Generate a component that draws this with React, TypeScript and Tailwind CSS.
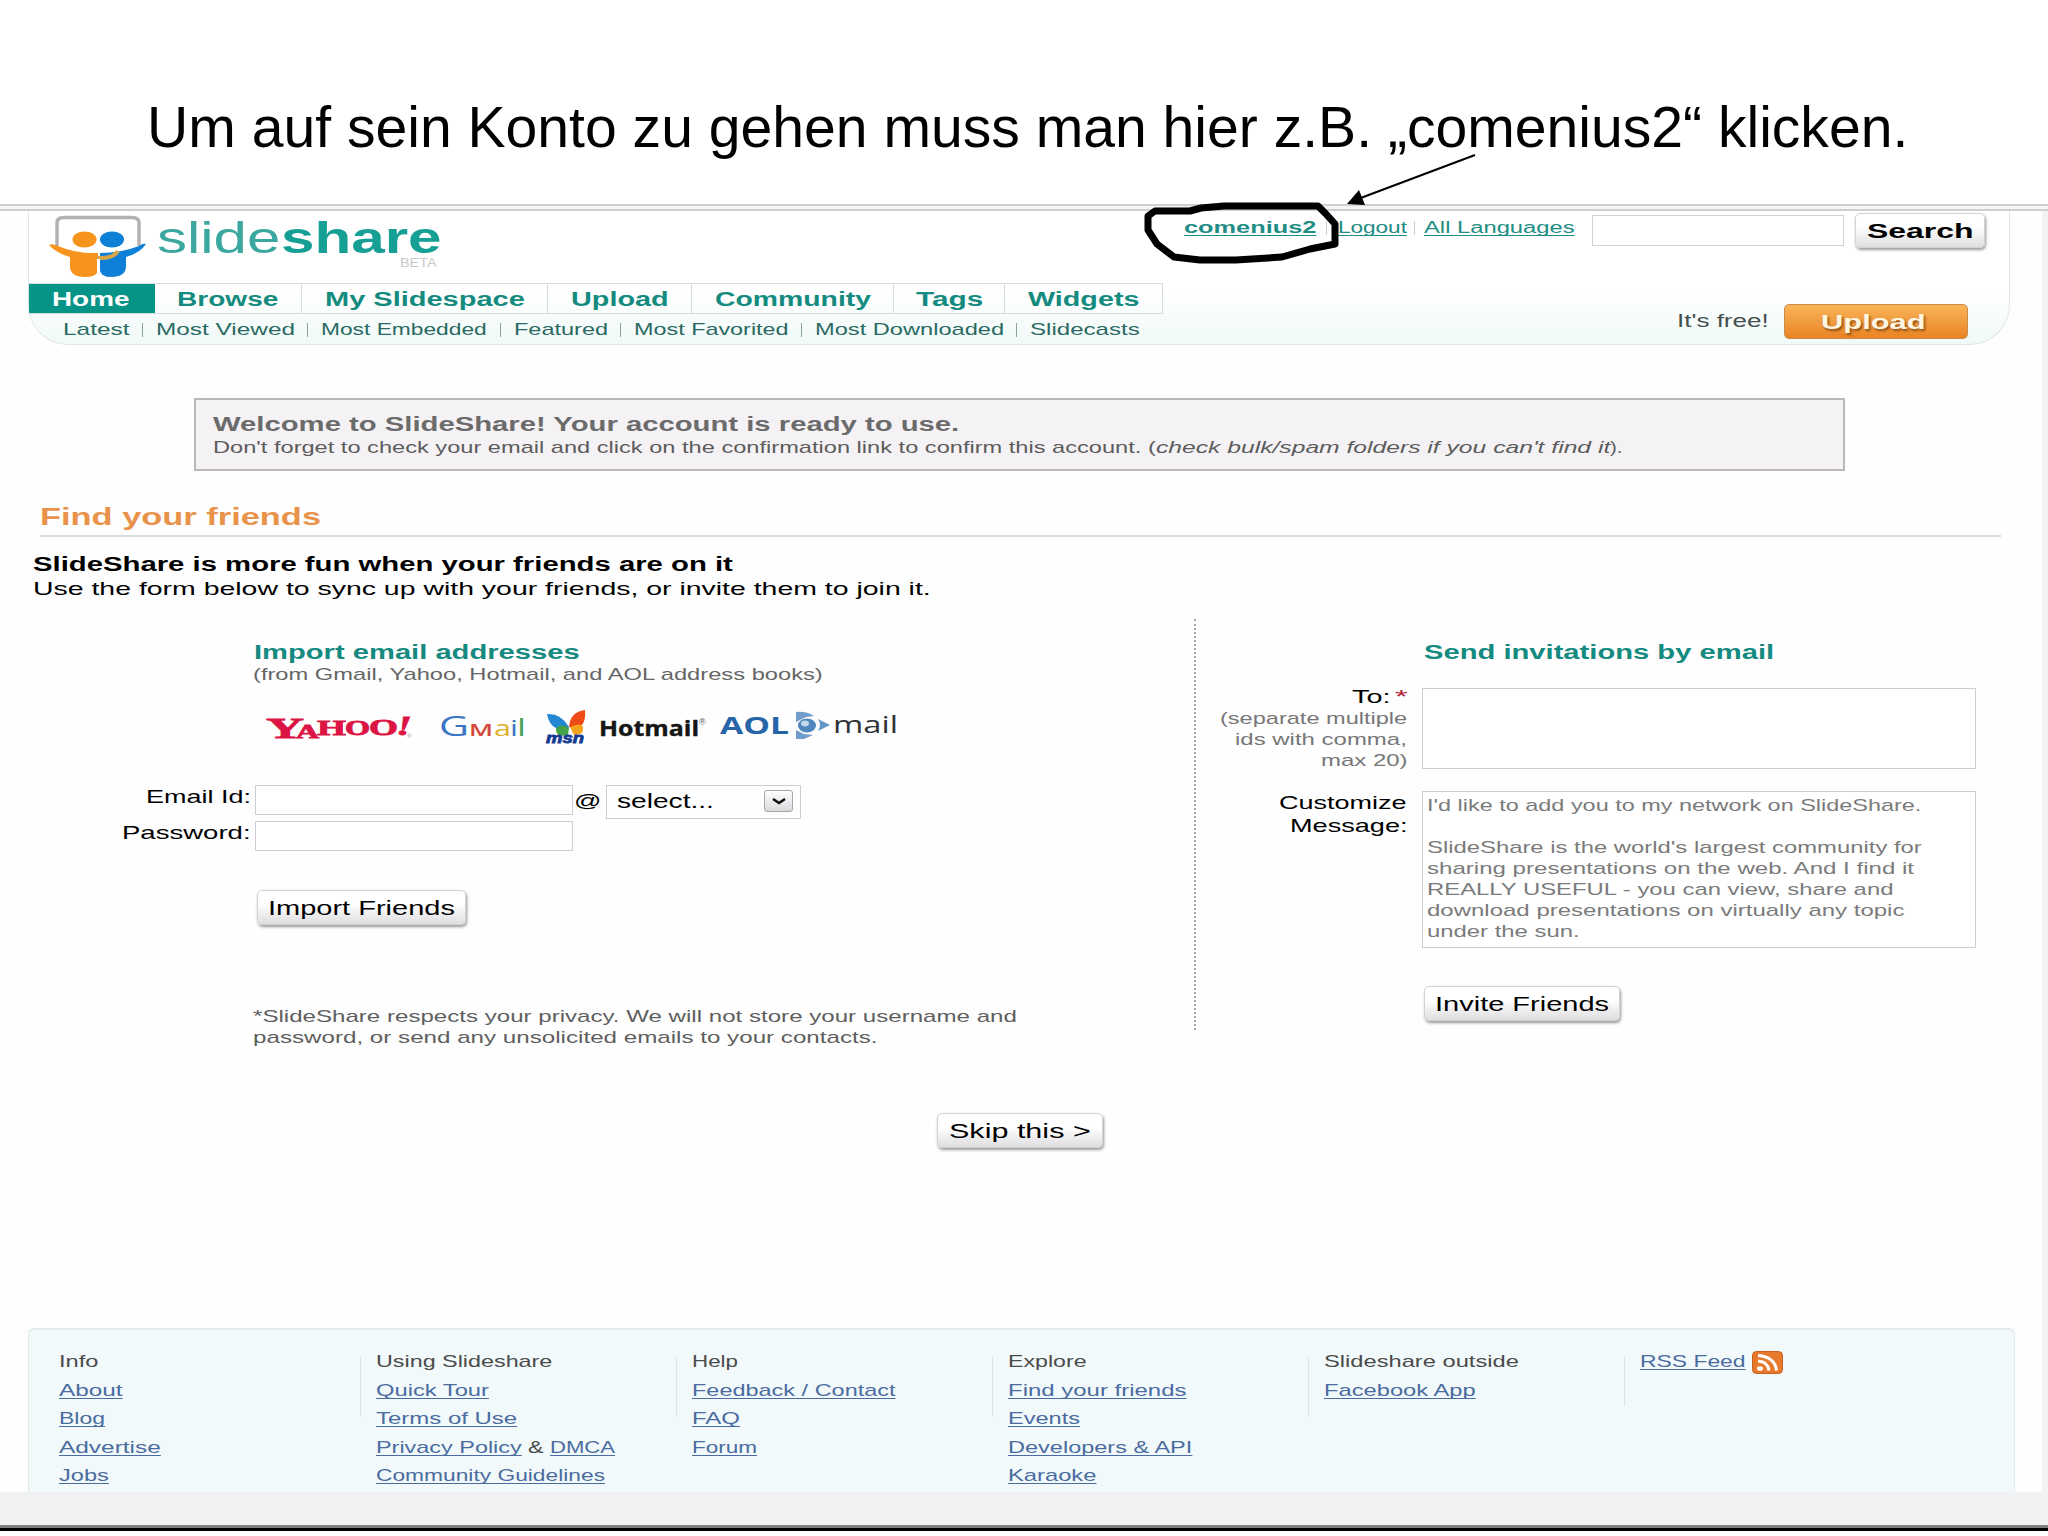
import { useLayoutEffect, useRef, useState } from "react";
import type { ReactNode } from "react";
import { clsx } from "clsx";

type FitProps = { className: string; underline?: boolean; children: ReactNode };

// Stretches its text to the width of the box it sits in.
function Fit({ className, underline, children }: FitProps) {
  const box = useRef<HTMLSpanElement>(null);
  const text = useRef<HTMLSpanElement>(null);
  const [scale, setScale] = useState(1);

  useLayoutEffect(() => {
    if (!box.current || !text.current) return;
    setScale(box.current.clientWidth / text.current.offsetWidth);
  }, [children]);

  return (
    <span ref={box} className={clsx("block shrink-0 whitespace-nowrap text-left", className)}>
      <span
        ref={text}
        className={clsx(
          "inline-block origin-left",
          underline && "underline decoration-1 underline-offset-2 [text-decoration-skip-ink:none]"
        )}
        style={{ transform: `scaleX(${scale})` }}
      >
        {children}
      </span>
    </span>
  );
}

const tabs = [
  { label: "Home", box: "w-[126px] bg-[#069489] pr-[3px] text-white", text: "w-[78px]" },
  { label: "Browse", box: "w-[147px] border-r pr-[2px]", text: "w-[101px]" },
  { label: "My Slidespace", box: "w-[246px] border-r", text: "w-[200px]" },
  { label: "Upload", box: "w-[144px] border-r", text: "w-[98px]" },
  { label: "Community", box: "w-[202px] border-r", text: "w-[156px]" },
  { label: "Tags", box: "w-[111px] border-r", text: "w-[67px]" },
  { label: "Widgets", box: "w-[158px] border-r", text: "w-[112px]" },
];

const subnav = [
  { label: "Latest", text: "w-[66px]" },
  { label: "Most Viewed", text: "w-[139px]" },
  { label: "Most Embedded", text: "w-[166px]" },
  { label: "Featured", text: "w-[94px]" },
  { label: "Most Favorited", text: "w-[154px]" },
  { label: "Most Downloaded", text: "w-[189px]" },
  { label: "Slidecasts", text: "w-[109px]" },
];

const message = [
  { line: "I'd like to add you to my network on SlideShare.", text: "w-[495px]" },
  { line: "", text: "" },
  { line: "SlideShare is the world's largest community for", text: "w-[495px]" },
  { line: "sharing presentations on the web. And I find it", text: "w-[487px]" },
  { line: "REALLY USEFUL - you can view, share and", text: "w-[466px]" },
  { line: "download presentations on virtually any topic", text: "w-[477px]" },
  { line: "under the sun.", text: "w-[153px]" },
];

const footer = [
  {
    title: "Info",
    titleWidth: "w-[39px]",
    column: "w-[301px]",
    links: [
      { label: "About", text: "w-[63px]" },
      { label: "Blog", text: "w-[46px]" },
      { label: "Advertise", text: "w-[102px]" },
      { label: "Jobs", text: "w-[50px]" },
    ],
  },
  {
    title: "Using Slideshare",
    titleWidth: "w-[177px]",
    column: "w-[316px]",
    links: [
      { label: "Quick Tour", text: "w-[113px]" },
      { label: "Terms of Use", text: "w-[141px]" },
      { label: "Privacy Policy", text: "w-[146px]", extra: "DMCA" },
      { label: "Community Guidelines", text: "w-[229px]" },
    ],
  },
  {
    title: "Help",
    titleWidth: "w-[46px]",
    column: "w-[316px]",
    links: [
      { label: "Feedback / Contact", text: "w-[203px]" },
      { label: "FAQ", text: "w-[48px]" },
      { label: "Forum", text: "w-[65px]" },
    ],
  },
  {
    title: "Explore",
    titleWidth: "w-[79px]",
    column: "w-[316px]",
    links: [
      { label: "Find your friends", text: "w-[179px]" },
      { label: "Events", text: "w-[72px]" },
      { label: "Developers & API", text: "w-[184px]" },
      { label: "Karaoke", text: "w-[88px]" },
    ],
  },
  {
    title: "Slideshare outside",
    titleWidth: "w-[195px]",
    column: "w-[316px]",
    links: [{ label: "Facebook App", text: "w-[152px]" }],
  },
];

function PushButton({ className, text, children }: { className: string; text: string; children: ReactNode }) {
  return (
    <button
      type="button"
      className={clsx(
        "flex h-[35px] items-center justify-center rounded-[5px] border border-[#d2d2d2] bg-linear-to-b from-white from-40% to-[#dedee0] text-black shadow-[1px_2px_3px_#999]",
        className
      )}
    >
      <Fit className={clsx("leading-6", text)}>{children}</Fit>
    </button>
  );
}

function SlideshareLogo() {
  return (
    <svg className="h-[63px] w-[98px]" viewBox="0 0 98 63" fill="none">
      <path d="M8 31V8Q8 2.500 15 2.500H83Q90 2.500 90 8V31" stroke="#b3b1b1" strokeWidth="3.500" />
      <path d="M0 30Q3 28 9 31Q28 39 49 38V56Q47 62 36 62Q21 62 21 51V42Q7 38 0 30Z" fill="#f7941e" />
      <path d="M97 29Q94 28 90 31Q72 38 51 38V56Q53 62 62 62Q77 62 77 51V42Q91 38 97 29Z" fill="#0e80d8" />
      <path d="M48 43Q64 44 69 36" stroke="#d9a548" strokeWidth="4" />
      <path d="M49.500 44V62" stroke="#fff" strokeWidth="3" />
      <ellipse cx="35.500" cy="24.500" rx="12" ry="8" fill="#f7941e" />
      <ellipse cx="63" cy="24.500" rx="12" ry="8" fill="#0e80d8" />
    </svg>
  );
}

function MailLogos() {
  return (
    <svg className="h-[36px] w-[634px] overflow-visible" viewBox="0 0 634 36">
      <g fontFamily="'Liberation Serif', serif" fontWeight="700" fill="#dc1444" stroke="#dc1444" strokeWidth="0.800">
        <text x="0" y="28" fontSize="30" textLength="38" lengthAdjust="spacingAndGlyphs">Y</text>
        <text x="30" y="28" fontSize="18" textLength="23" lengthAdjust="spacingAndGlyphs">A</text>
        <text x="51" y="25" fontSize="22" textLength="29" lengthAdjust="spacingAndGlyphs">H</text>
        <text x="79" y="25" fontSize="20" textLength="25" lengthAdjust="spacingAndGlyphs">O</text>
        <text x="103" y="25" fontSize="23" textLength="29" lengthAdjust="spacingAndGlyphs">O</text>
        <text x="130" y="25" fontSize="28" fontStyle="italic" textLength="16" lengthAdjust="spacingAndGlyphs">!</text>
      </g>
      <text x="141" y="28" fontFamily="'Liberation Sans', sans-serif" fontSize="6" fill="#999">®</text>
      <g fontFamily="'Open Sans', sans-serif">
        <text x="173" y="26" fontSize="27" fill="#3b76c4" textLength="30" lengthAdjust="spacingAndGlyphs">G</text>
        <text x="203" y="26" fontSize="16" fontWeight="600" fill="#d4473c" textLength="24" lengthAdjust="spacingAndGlyphs">M</text>
        <text x="228" y="26" fontSize="22" fill="#e2b12c" textLength="17" lengthAdjust="spacingAndGlyphs">a</text>
        <text x="244" y="26" fontSize="22" fill="#3b76c4" textLength="8" lengthAdjust="spacingAndGlyphs">i</text>
        <text x="251" y="26" fontSize="23" fill="#4ba35a" textLength="9" lengthAdjust="spacingAndGlyphs">l</text>
      </g>
      <path d="M281 4Q295 3 303 17L301 24Q291 25 290 18Q283 15 281 4Z" fill="#2387d2" />
      <path d="M290 18Q296 13 303 18L302 25Q289 28 290 18Z" fill="#43a447" />
      <path d="M303 17Q304 2 319 0Q320 10 316 15Q310 19 303 17Z" fill="#ee4b18" />
      <path d="M304 17Q315 12 317 17Q318 26 308 25Z" fill="#f5a51d" />
      <text x="280" y="33" fontFamily="'Liberation Sans', sans-serif" fontSize="14" fontWeight="700" fontStyle="italic" fill="#153a93" stroke="#153a93" strokeWidth="0.800" textLength="38" lengthAdjust="spacingAndGlyphs">msn</text>
      <text x="333" y="26" fontFamily="'Open Sans', sans-serif" fontSize="22" fontWeight="700" fill="#161616" stroke="#161616" strokeWidth="0.400" textLength="100" lengthAdjust="spacingAndGlyphs">Hotmail</text>
      <text x="433" y="15" fontFamily="'Liberation Sans', sans-serif" fontSize="9" fill="#555">®</text>
      <text x="454" y="24" fontFamily="'Open Sans', sans-serif" fontSize="24" fontWeight="700" fill="#2765a8" textLength="69" lengthAdjust="spacingAndGlyphs">AOL</text>
      <path d="M530 2Q540 1 548 6L540 7L530 12Z" fill="#6f9cc8" />
      <path d="M530 20L538 24L547 25L538 29L530 29Z" fill="#6f9cc8" />
      <ellipse cx="541" cy="15.500" rx="9" ry="7" fill="#4f86bd" />
      <ellipse cx="539" cy="13.500" rx="4" ry="3" fill="#c3d9ed" />
      <path d="M552 9L564 15L552 21Q556 15 552 9Z" fill="#6497c9" />
      <text x="567" y="22.500" fontFamily="'Open Sans', sans-serif" fontSize="24" fill="#2f3338" textLength="65" lengthAdjust="spacingAndGlyphs">mail</text>
    </svg>
  );
}

function RssIcon() {
  return (
    <svg className="h-[23px] w-[31px]" viewBox="0 0 31 23" fill="none">
      <rect x="0.500" y="0.500" width="30" height="22" rx="4" fill="#e6792b" stroke="#c95f1d" />
      <ellipse cx="8" cy="17.500" rx="3" ry="2.300" fill="#fff" />
      <path d="M6 10Q16 10.500 17 19.500M6 4.500Q23 6 24.500 19.500" stroke="#fff" strokeWidth="3" />
    </svg>
  );
}

// Hand-drawn circle and arrow around the account name
function Annotation() {
  return (
    <svg className="pointer-events-none absolute left-[1130px] top-[140px] h-[140px] w-[360px]" viewBox="1130 140 360 140" fill="none">
      <path
        d="M1148 230V216L1155 211L1190 211L1201 208L1224 206H1318L1326 214L1335 224V244L1310 249L1282 257L1236 260H1200L1174 257L1157 244Z"
        stroke="#000"
        strokeWidth="7"
        strokeLinejoin="round"
      />
      <path d="M1475 155L1358 199" stroke="#000" strokeWidth="2" />
      <path d="M1347 204L1359 190L1365 205Z" fill="#000" />
    </svg>
  );
}

function Header() {
  return (
    <header className="ml-7 flex h-[134px] w-[1982px] rounded-b-[40px] border-x border-b border-[#dde8e6] bg-linear-to-b from-white from-60% to-[#f0faf8] font-[Liberation_Sans,Arial,sans-serif]">
      <div className="w-[1135px]">
        <div className="flex h-[72px] pl-[20px] pt-1">
          <SlideshareLogo />
          <div className="ml-[10px] flex flex-col text-[#16a095]">
            <div className="flex pt-[2px] text-[44px] leading-[42px]">
              <Fit className="w-[124px] text-[#3ba79e]">slide</Fit>
              <Fit className="w-[160px] font-bold">share</Fit>
            </div>
            <Fit className="ml-[243px] mt-[-2px] w-[36px] text-[12px] leading-[12px] text-[#c9c9c9]">BETA</Fit>
          </div>
        </div>
        <nav className="flex h-[31px] text-xl font-bold text-[#158b80]">
          {tabs.map((tab) => (
            <div key={tab.label} className={clsx("flex items-center justify-center border-y border-[#d3dedd]", tab.box)}>
              <Fit className={clsx("leading-6", tab.text)}>{tab.label}</Fit>
            </div>
          ))}
        </nav>
        <div className="flex pl-[34px] pt-[6px] text-[17px] leading-5 text-[#2a6a63]">
          {subnav.map((item, i) => (
            <div key={item.label} className="flex">
              {i > 0 && <span className="flex w-[26.500px] items-center justify-center"><i className="h-[14px] w-px bg-[#8aa3a0]" /></span>}
              <Fit className={item.text}>{item.label}</Fit>
            </div>
          ))}
        </div>
      </div>
      <div className="flex-1">
        <div className="flex h-[93px] pl-[20px] pt-[2px] text-base leading-5 text-[#218d84]">
          <Fit underline className="mt-[5px] w-[133px] font-bold">comenius2</Fit>
          <i className="ml-[9px] mt-2 h-[14px] w-px bg-[#c5d2d0]" />
          <Fit underline className="ml-[11px] mt-[5px] w-[69px]">Logout</Fit>
          <i className="ml-[7px] mt-2 h-[14px] w-px bg-[#c5d2d0]" />
          <Fit underline className="ml-[9px] mt-[5px] w-[150px]">All Languages</Fit>
          <div className="ml-[18px] mt-[2px] h-[31px] w-[252px] border border-[#cfd3d3] bg-white" />
          <PushButton className="ml-[11px] w-[130px] text-xl font-bold" text="w-[107px]">Search</PushButton>
        </div>
        <div className="flex justify-end pr-[41px]">
          <Fit className="mr-[16px] mt-[7px] w-[91px] text-lg leading-5 text-[#454f4e]">It's free!</Fit>
          <button
            type="button"
            className="flex h-[35px] w-[184px] items-center justify-center rounded-[5px] border border-[#c98a4a] bg-linear-to-b from-[#f8b457] to-[#ea8423] pr-[6px] text-xl font-bold text-[#fff6e2]"
          >
            <Fit className="w-[105px] leading-6 [text-shadow:1px_2px_2px_#8a4d12]">Upload</Fit>
          </button>
        </div>
      </div>
    </header>
  );
}

function ImportForm() {
  return (
    <section className="w-[1194px] pt-[21px] text-black">
      <Fit className="ml-[254px] w-[325px] text-xl leading-6 font-bold text-[#148a80]">Import email addresses</Fit>
      <Fit className="ml-[253px] mt-px w-[570px] text-[17px] leading-5 text-[#666]">(from Gmail, Yahoo, Hotmail, and AOL address books)</Fit>
      <div className="ml-[266px] mt-[25px]">
        <MailLogos />
      </div>
      <div className="mt-[39px] flex h-9 text-[19px] leading-6">
        <Fit className="ml-[146px] w-[105px]">Email Id:</Fit>
        <div className="ml-1 h-[30px] w-[318px] border border-[#cdcdd2] bg-white" />
        <Fit className="ml-px mt-1 w-[27px]">@</Fit>
        <div className="ml-[5px] flex h-[34px] w-[195px] justify-between border border-[#cdcdd2] pl-[10px] pr-[7px] pt-[3px]">
          <Fit className="w-[97px] text-xl leading-6">select...</Fit>
          <span className="mt-px flex h-[22px] w-[29px] items-center justify-center rounded-[3px] border border-[#a5a5aa] bg-linear-to-b from-white to-[#dadade]">
            <svg className="h-[7px] w-[14px]" viewBox="0 0 14 7" fill="none">
              <path d="M1 1L7 5L13 1" stroke="#111" strokeWidth="2.500" />
            </svg>
          </span>
        </div>
      </div>
      <div className="flex h-[69px] text-[19px] leading-6">
        <Fit className="ml-[122px] w-[129px]">Password:</Fit>
        <div className="ml-1 h-[30px] w-[318px] border border-[#cdcdd2] bg-white" />
      </div>
      <PushButton className="ml-[257px] w-[209px] text-xl" text="w-[187px]">Import Friends</PushButton>
      <div className="ml-[253px] mt-[81px] text-[17px] leading-[21px] text-[#5f5f5f]">
        <Fit className="w-[764px]">*SlideShare respects your privacy. We will not store your username and</Fit>
        <Fit className="w-[624px]">password, or send any unsolicited emails to your contacts.</Fit>
      </div>
    </section>
  );
}

function InviteForm() {
  return (
    <section className="h-[411px] border-l-2 border-dotted border-[#a9a9a9] pt-[21px]">
      <Fit className="ml-[228px] w-[350px] text-xl leading-6 font-bold text-[#148a80]">Send invitations by email</Fit>
      <div className="mt-6 flex">
        <div className="flex w-[211px] flex-col items-end text-[17px] leading-[21px] text-[#777]">
          <div className="mt-[-2px] flex text-[19px] leading-[22px] text-black">
            <Fit className="w-[38px]">To:</Fit>
            <Fit className="ml-[5px] w-[12px] text-[#b01830]">*</Fit>
          </div>
          <Fit className="w-[187px]">(separate multiple</Fit>
          <Fit className="w-[172px]">ids with comma,</Fit>
          <Fit className="w-[86px]">max 20)</Fit>
        </div>
        <div className="ml-[15px] h-[81px] w-[554px] border border-[#cdcdd2] bg-white" />
      </div>
      <div className="mt-[20px] flex">
        <div className="flex w-[211px] flex-col items-end text-[19px] leading-[23px] text-black">
          <Fit className="w-[128px]">Customize</Fit>
          <Fit className="w-[117px]">Message:</Fit>
        </div>
        <div className="ml-[15px] h-[157px] w-[554px] border border-[#cdcdd2] bg-white pl-1 pt-[3px] text-[17px] leading-[21px] text-[#7b7b7b]">
          {message.map(({ line, text }) =>
            line ? <Fit key={line} className={text}>{line}</Fit> : <div key="gap" className="h-[21px]" />
          )}
        </div>
      </div>
      <PushButton className="ml-[228px] mt-[38px] w-[196px] text-xl" text="w-[174px]">Invite Friends</PushButton>
    </section>
  );
}

function Footer() {
  return (
    <footer className="ml-7 flex h-[164px] w-[1987px] rounded-t-md border-x border-t-2 border-[#e3e9ea] bg-[#f2f9fb] pl-[30px] pt-[22px] text-[17px] leading-5 text-[#4b4b4b]">
      {footer.map((col, i) => (
        <div key={col.title} className={clsx("flex", col.column)}>
          {i > 0 && <i className="mr-[15px] mt-[5px] h-[60px] w-px bg-[#dbe3e4]" />}
          <div className="flex flex-col gap-[8.600px]">
            <Fit className={col.titleWidth}>{col.title}</Fit>
            {col.links.map((link) => (
              <div key={link.label} className="flex text-[#4a6c9f]">
                <Fit underline className={link.text}>{link.label}</Fit>
                {"extra" in link && (
                  <>
                    <Fit className="ml-[6px] w-[15px] text-[#4b4b4b]">&amp;</Fit>
                    <Fit underline className="ml-[7px] w-[65px]">{link.extra}</Fit>
                  </>
                )}
              </div>
            ))}
          </div>
        </div>
      ))}
      <i className="mt-[5px] h-[49px] w-px bg-[#dbe3e4]" />
      <Fit underline className="ml-[15px] w-[105px] text-[#4a6c9f]">RSS Feed</Fit>
      <div className="-mt-px ml-[7px]">
        <RssIcon />
      </div>
    </footer>
  );
}

export default function App() {
  return (
    <div className="relative flex h-[1536px] w-[2048px] flex-col overflow-hidden bg-white font-[Liberation_Sans,Arial,sans-serif]">
      <h1 className="h-[204px] pl-[147px] pt-[97px] text-[57px] leading-[60px] text-black">
        <Fit className="w-[1761px]">Um auf sein Konto zu gehen muss man hier z.B. „comenius2“ klicken.</Fit>
      </h1>
      <div className="h-[7px] border-y-2 border-[#cfcfcf] bg-[#f5f5f5]" />

      <main className="flex h-[1281px] flex-col border-r-[6px] border-[#f3f1f4] bg-[#fefefe]">
        <Header />

        <div className="ml-[194px] mt-[53px] h-[73px] w-[1651px] border-2 border-[#bab6ba] bg-[#f5f2f5] pl-[17px] pt-3">
          <Fit className="w-[746px] text-xl leading-6 font-bold text-[#6b6b6b]">
            Welcome to SlideShare! Your account is ready to use.
          </Fit>
          <div className="mt-[2px] flex text-[17px] leading-5 text-[#5c5c5c]">
            <Fit className="w-[943px]">
              Don't forget to check your email and click on the confirmation link to confirm this account. (
            </Fit>
            <Fit className="w-[454px] italic">check bulk/spam folders if you can't find it</Fit>
            <Fit className="w-[12px]">).</Fit>
          </div>
        </div>

        <div className="ml-10 mt-[32px] h-[34px] w-[1961px] border-b-2 border-[#d4dbdb] text-2xl leading-7 text-[#e8924a]">
          <Fit className="w-[281px] font-bold">Find your friends</Fit>
        </div>
        <div className="ml-[33px] mt-[15px] h-[67px] text-black">
          <Fit className="w-[700px] text-xl leading-6 font-bold">SlideShare is more fun when your friends are on it</Fit>
          <Fit className="mt-px w-[898px] text-[19px] leading-6">
            Use the form below to sync up with your friends, or invite them to join it.
          </Fit>
        </div>

        <div className="flex h-[494px]">
          <ImportForm />
          <InviteForm />
        </div>
        <PushButton className="ml-[937px] w-[166px] shrink-0 text-xl" text="w-[142px]">Skip this &gt;</PushButton>
        <div className="flex-1" />
        <Footer />
      </main>

      <div className="h-[33px] bg-[#f0f1f3]" />
      <div className="h-[6px] border-t-[3px] border-[#808080] bg-black" />
      <Annotation />
    </div>
  );
}
